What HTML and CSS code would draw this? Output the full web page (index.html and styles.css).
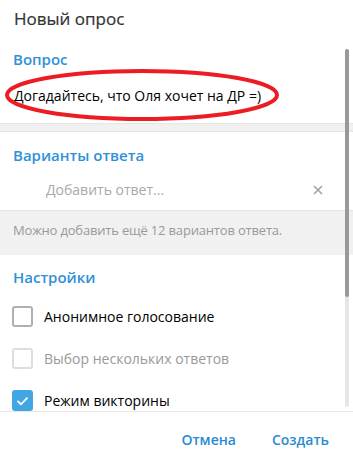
FILE: index.html
```html
<!DOCTYPE html>
<html lang="ru">
<head>
    <meta charset="UTF-8">
    <meta name="viewport" content="width=device-width, initial-scale=1.0">
    <title>Новый опрос</title>
    <link rel="stylesheet" href="styles.css">
</head>
<body>

    <div class="box">
        <!-- Title -->
        <div class="box-title">Новый опрос</div>

        <!-- Scroll area -->
        <div class="scroll">
            <div class="section question">
                <div class="label">Вопрос</div>
                <div class="question-text">Догадайтесь, что Оля хочет на ДР =)</div>
                <svg class="scribble" width="280" height="56" viewBox="0 0 280 56">
                    <ellipse cx="140" cy="27" rx="135" ry="24" fill="none" stroke="#ec1c24" stroke-width="4"/>
                </svg>
            </div>

            <div class="divider"></div>

            <div class="section answers">
                <div class="label">Варианты ответа</div>
                <div class="answer-row">
                    <span class="placeholder">Добавить ответ...</span>
                    <svg class="remove" width="10" height="10" viewBox="0 0 10 10">
                        <path d="M1 1L9 9M9 1L1 9" stroke="#a3a3a3" stroke-width="1.6"/>
                    </svg>
                </div>
            </div>

            <div class="hint">Можно добавить ещё 12 вариантов ответа.</div>

            <div class="section settings">
                <div class="label">Настройки</div>
                <div class="check-row">
                    <span class="checkbox"></span>
                    <span class="check-label">Анонимное голосование</span>
                </div>
                <div class="check-row disabled">
                    <span class="checkbox"></span>
                    <span class="check-label">Выбор нескольких ответов</span>
                </div>
                <div class="check-row">
                    <span class="checkbox checked">
                        <svg width="13" height="10" viewBox="0 0 13 10">
                            <path d="M1.5 5L5 8.3L11.5 1.7" fill="none" stroke="#fff" stroke-width="1.8"/>
                        </svg>
                    </span>
                    <span class="check-label">Режим викторины</span>
                </div>
            </div>

            <!-- Scrollbar -->
            <div class="scrollbar"><div class="thumb"></div></div>
        </div>

        <!-- Buttons -->
        <div class="box-footer">
            <a href="#" class="btn">Отмена</a>
            <a href="#" class="btn">Создать</a>
        </div>
    </div>

</body>
</html>
```

FILE: styles.css
```css
body {
    margin: 0;
    padding: 0;
    background-color: #fff;
    font-family: 'Open Sans', 'Noto Sans', sans-serif;
    color: #000;
}

.box {
    width: 353px;
    height: 463px;
    display: flex;
    flex-direction: column;
    overflow: hidden;
}

/* Title */
.box-title {
    height: 40px;
    padding: 5px 0 0 14px;
    box-sizing: border-box;
    font-size: 17px;
    line-height: 28px;
    color: #333;
    -webkit-text-stroke: 0.2px #333;
}

/* Scroll area */
.scroll {
    position: relative;
    height: 372px;
    overflow: hidden;
    border-bottom: 1px solid #e8e8e8;
    box-sizing: border-box;
}

.section {
    padding: 0 14px 0 13px;
}

.label {
    font-size: 15px;
    font-weight: 600;
    line-height: 20px;
    color: #2f91d6;
}

/* Question */
.question {
    position: relative;
    padding-top: 9px;
    padding-bottom: 17px;
}

.question .label {
    margin-bottom: 17px;
}

.question-text {
    font-size: 14px;
    line-height: 20px;
    padding-left: 1px;
}

/* red marker circle drawn over the question */
.scribble {
    position: absolute;
    left: 2px;
    top: 28px;
}

.divider {
    height: 9px;
    background-color: #f1f1f1;
    box-shadow: inset 0 1px 1px rgba(0, 0, 0, 0.05), inset 0 -1px 1px rgba(0, 0, 0, 0.05);
}

/* Answers */
.answers {
    padding-top: 13px;
}

.answer-row {
    display: flex;
    align-items: center;
    justify-content: space-between;
    padding: 15px 16px 10px 33px;
    font-size: 14px;
    line-height: 20px;
}

.placeholder {
    color: #a8a8a8;
}

.hint {
    height: 45px;
    box-sizing: border-box;
    padding: 10px 13px 0 13px;
    background-color: #f1f1f1;
    box-shadow: inset 0 1px 1px rgba(0, 0, 0, 0.06);
    font-size: 13px;
    line-height: 20px;
    letter-spacing: -0.18px;
    color: #999;
}

/* Settings */
.settings {
    padding-top: 12px;
    padding-left: 12px;
}

.settings .label {
    margin-left: 1px;
    margin-bottom: 19px;
}

.check-row {
    display: flex;
    align-items: center;
    height: 21px;
    margin-bottom: 21px;
    font-size: 14px;
}

.checkbox {
    width: 21px;
    height: 21px;
    box-sizing: border-box;
    border: 2px solid #b0b0b0;
    border-radius: 3px;
    margin-right: 11px;
    display: flex;
    align-items: center;
    justify-content: center;
}

.checkbox.checked {
    border-color: #40a7e3;
    background-color: #40a7e3;
}

.disabled .checkbox {
    border-color: #dedede;
}

.disabled .check-label {
    color: #999;
}

/* Scrollbar */
.scrollbar {
    position: absolute;
    top: 9px;
    right: 4px;
    width: 4px;
    height: 358px;
    border-radius: 2px;
    background-color: #e6e6e6;
}

.thumb {
    height: 248px;
    border-radius: 2px;
    background-color: #999;
}

/* Footer */
.box-footer {
    display: flex;
    justify-content: flex-end;
    gap: 36px;
    padding: 16px 24px 0 0;
}

.btn {
    font-size: 14px;
    font-weight: 600;
    line-height: 24px;
    color: #2a8bd2;
    text-decoration: none;
}
```
